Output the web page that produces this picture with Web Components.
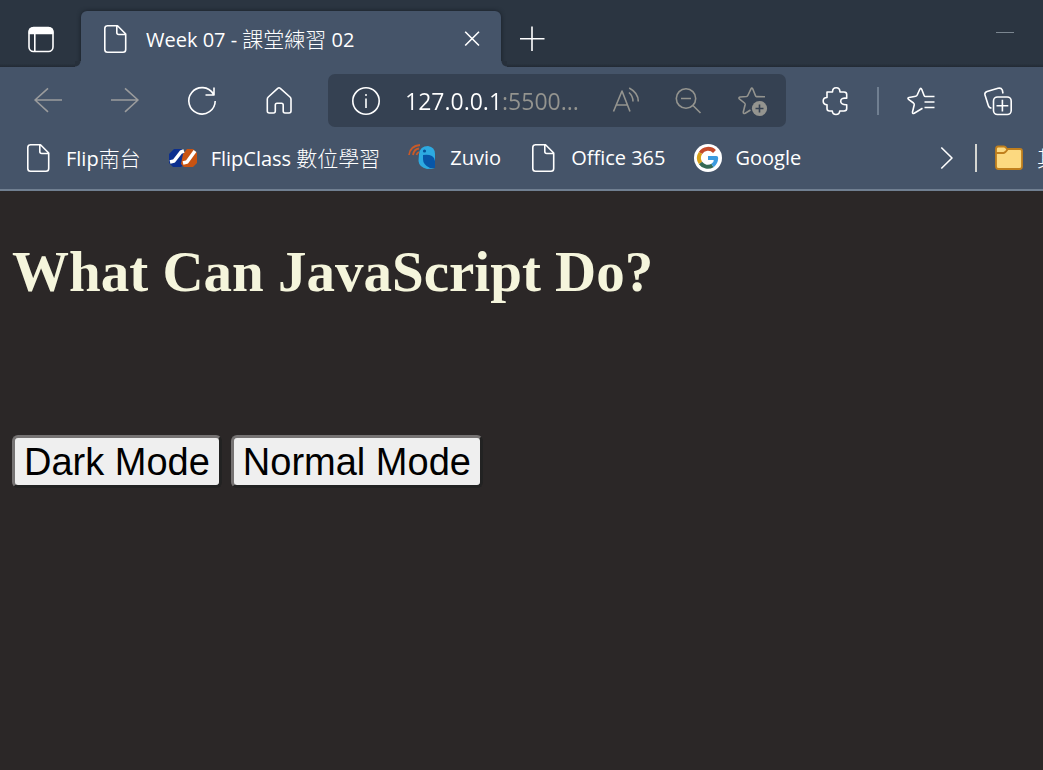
<!DOCTYPE html>
<html lang="zh-Hant">
<head>
<meta charset="utf-8">
<meta name="viewport" content="width=device-width, initial-scale=1">
<title>Week 07 - 課堂練習 02</title>
<style>
  body { margin: 0; background: #2b2727; }
</style>
</head>
<body>
<browser-window></browser-window>

<script>
const ICONS = {
  panes: `<rect x="2" y="1.500" width="24" height="24" rx="4.500"/><path d="M2.500 7.500V5.500Q2.500 2 6 2H22Q25.500 2 25.500 5.500V7.500Z" fill="currentColor"/><path d="M7.800 8V25"/>`,
  page: `<path d="M6 .8H16.500L24.700 9V24.500Q24.700 27.200 22 27.200H6.500Q3.800 27.200 3.800 24.500V3.500Q3.800.8 6.500.8M15.800 1V7.500Q15.800 9.500 17.800 9.500H24.500"/>`,
  back: `<path d="M28 13H1M14 1.300L1 13L14 24.800"/>`,
  forward: `<path d="M0 13H27M14 1.300L27 13L14 24.800"/>`,
  reload: `<path d="M25.300 7A13.200 13.200 0 1 0 27.200 14M26 .5V8H17.500"/>`,
  home: `<path d="M2.300 12.300Q2.300 11 3.300 10L12.700 1.300Q14 .3 15.300 1.300L25 10Q26 11 26 12.300V24Q26 26 24 26H20Q18.200 26 18.200 24V18Q18.200 16.300 16.500 16.300H12Q10.300 16.300 10.300 18V24Q10.300 26 8.500 26H4.300Q2.300 26 2.300 24Z"/>`,
  info: `<circle cx="14" cy="14" r="13.200"/><path d="M14 11.500V21"/><circle cx="14" cy="8" r="1" fill="currentColor" stroke="none"/>`,
  read: `<path d="M1.500 24.500L10 4L18 24.500M4.500 18H15.300M17 5.500Q21 9 21 14.500M17.200 1Q26.500 6 26.300 14.500"/>`,
  zoomout: `<circle cx="11" cy="11.500" r="9.700"/><path d="M6 11.500H16M18 18.500L25.500 26"/>`,
  staradd: `<path d="M27 9.800L18.500 9.600Q17.800 9.600 17.500 8.800L14.700 1.800Q13.800.2 13 1.800L9.800 8.500Q9.400 9.300 8.500 9.500L2 10Q.3 10.500 1.300 11.800L6.500 16Q7.300 16.700 7.100 17.700L5.300 25Q5.200 27.200 7.200 26.200L12.500 23"/><circle cx="21.500" cy="21.500" r="7.600" fill="currentColor" stroke="none"/><path d="M21.500 17.500V25.500M17.500 21.500H25.500" stroke="#354152"/>`,
  puzzle: `<path d="M5 5H10.500Q10.500.8 14.200.8T18 5H22Q24.700 5 24.700 7.500V11.200Q18.700 10.500 18.700 14.200T24.700 17.700V21.500Q24.700 24 22 24H17.700Q17.500 27.500 14 27.500T10.300 24H7.500Q5 24 5 21.500V17.700Q1.200 17.500 1.200 14T5 10.500V5Z"/>`,
  favorites: `<path d="M27.500 9.500H18.500Q17.500 9.500 17.200 8.700L14.800 2.500Q13.800.3 12.700 2.500L10.200 8Q9.800 9 8.800 9.200L2 10.500Q.2 11 1.500 12.300L6.500 16Q7.500 16.800 7.200 18L5.500 25Q5.300 27.200 7.200 26.200L15.500 21.300M17.500 15H27.500M17.500 20.500H27.500"/>`,
  collections: `<path d="M7.500 21Q5 21 4.300 18.500L1 8Q.3 5.500 3 4.500L14 1.300Q17 .4 18.300 3L19 6.500"/><rect x="9.500" y="10" width="17.700" height="17.500" rx="4"/><path d="M12.500 18.700H24.300M18.400 12.800V24.600"/>`,
  close: `<path d="M7.200 6.700L21 20.500M21 6.700L7.200 20.500"/>`,
  plus: `<path d="M14 1.500V26M2 13.700H26.500"/>`,
  chevron: `<path d="M8.300 3.500L19 14L8.300 24.500"/>`,
  minimize: `<path d="M5 7.500H23" stroke-width="1"/>`,
  flip: `<g stroke="none"><path d="M5 5H12Q15 6 15 10V20L12 23H4L0 19V10Z" fill="#0b2e8e"/><path d="M18 5H24L28 9V19L24 23H15L12 20L14 10Z" fill="#c85312"/></g><path d="M1 18L5 17L12 8L15 7M14 19L18 18L26 7" stroke="#fff" stroke-width="3.500"/>`,
  zuvio: `<g stroke="none"><path d="M11 10Q12 2 20 2Q27 3 27 10V24Q24 25 19 25Q11 23 10.500 17Z" fill="#2daae1"/><path d="M15 11Q20 10 24 12Q27 14 27 17V24H22Q15 21 15 15Z" fill="#0756a8"/><circle cx="16.500" cy="7" r="1.600" fill="#075399"/></g><path d="M1 11Q2 2 12 1M5 11Q6 5 11 4.500M8.500 11Q9 9 11 8" stroke="#c85a28" stroke-width="1.800"/>`,
  google: `<circle cx="14" cy="14" r="14" fill="#fff" stroke="none"/><g stroke-width="4"><path d="M20.500 7.500A9 9 0 0 0 6.500 9" stroke="#c54b2b"/><path d="M6.500 9A9 9 0 0 0 6.500 19" stroke="#d7a018"/><path d="M6.500 19A9 9 0 0 0 18.500 21.500" stroke="#356b55"/><path d="M18.500 21.500Q22 19 22.200 14H14" stroke="#3b9bdf"/></g>`,
  folder: `<path d="M3 2.500H9Q10.500 2.500 12 5H25Q27 5 27 7V22.500Q27 25 24.500 25H3.500Q1 25 1 22.500V5Q1 2.500 3 2.500Z" fill="#fcd980" stroke="#c07f1d" stroke-width="1.800"/><path d="M1 9H8.500Q10 9 12.500 5.500" stroke="#c07f1d" stroke-width="1.800"/>`
};

const define = (name, markup, setup) => {
  const template = document.createElement('template');
  template.innerHTML = markup;
  customElements.define(name, class extends HTMLElement {
    static observedAttributes = ['name'];
    constructor() {
      super();
      this.attachShadow({ mode: 'open' }).append(template.content.cloneNode(true));
    }
    connectedCallback() { if (setup) setup(this, this.shadowRoot); }
    attributeChangedCallback() { if (setup) setup(this, this.shadowRoot); }
  });
};

define('ui-icon', `
  <style>
    :host { display: block; flex: none; width: 28px; height: 28px; }
    svg { display: block; width: 28px; height: 28px; overflow: visible; }
  </style>
  <svg viewBox="0 0 28 28" fill="none" stroke="currentColor" stroke-width="1.600" stroke-linejoin="round" stroke-linecap="butt" aria-hidden="true"></svg>`,
  (host, root) => { root.querySelector('svg').innerHTML = ICONS[host.getAttribute('name')] || ''; });

define('icon-button', `
  <style>
    :host { display: block; flex: none; width: 77px; }
    button { display: flex; align-items: center; justify-content: center; width: 100%; height: 44px;
      margin: 0; padding: 0; border: 0; border-radius: 6px; background: none; color: inherit; }
  </style>
  <button type="button"><ui-icon></ui-icon></button>`,
  (host, root) => {
    root.querySelector('ui-icon').setAttribute('name', host.getAttribute('icon'));
    root.querySelector('button').setAttribute('aria-label', host.getAttribute('label'));
  });

define('browser-tab', `
  <style>
    :host { display: flex; align-items: center; box-sizing: border-box; position: relative;
      flex: 0 1 420px; min-width: 0; height: 56px; padding: 0 9px 0 20px; gap: 17px;
      border-radius: 6px 6px 0 0; background: #455469; box-shadow: 0 0 4px #171d26; clip-path: inset(-5px -8px 0 -8px); }
    :host::before, :host::after { content: ""; position: absolute; bottom: 0; width: 6px; height: 6px; }
    :host::before { right: 100%; background: radial-gradient(circle at 0 0, #27303b 5px, #455469 6px); }
    :host::after { left: 100%; background: radial-gradient(circle at 100% 0, #27303b 5px, #455469 6px); }
    .title { flex: 1; min-width: 0; white-space: nowrap; overflow: hidden; }
    icon-button { width: 40px; }
  </style>
  <ui-icon name="page"></ui-icon>
  <span class="title"><slot></slot></span>
  <icon-button icon="close" label="Close tab"></icon-button>`);

define('tab-strip', `
  <style>
    :host { display: flex; align-items: flex-end; height: 67px; color: #fff;
      background: linear-gradient(#2b3541 95%, #222a34); }
    .menu { width: 81px; align-self: center; margin-top: 12px; }
    .new { width: 61px; align-self: center; margin-top: 10px; }
    .min { width: 77px; margin-left: auto; color: #7b8690; align-self: center; margin-top: 10px; }
  </style>
  <icon-button class="menu" icon="panes" label="Tab actions"></icon-button>
  <browser-tab>Week 07 - <slot></slot> 02</browser-tab>
  <icon-button class="new" icon="plus" label="New tab"></icon-button>
  <icon-button class="min" icon="minimize" label="Minimize"></icon-button>`);

define('address-field', `
  <style>
    :host { display: flex; align-items: center; box-sizing: border-box; flex: 1; min-width: 0; height: 53px;
      padding: 0 3px 0 24px; border-radius: 7px; background: #354152; }
    input { flex: 1; width: 0; min-width: 0; height: 36px; margin: 0 0 0 25px; padding: 0; border: 0; outline: 0;
      font: 23px/36px "Open Sans", "Noto Sans", sans-serif; color: transparent; caret-color: #fff;
      background: linear-gradient(90deg, #fff 98px, #94948f 98px); -webkit-background-clip: text; background-clip: text; }
    icon-button { width: 63px; color: #94948f; }
  </style>
  <ui-icon name="info"></ui-icon>
  <input type="text" aria-label="Address" value="127.0.0.1:5500..." spellcheck="false">
  <icon-button icon="read" label="Read aloud"></icon-button>
  <icon-button icon="zoomout" label="Zoom out"></icon-button>
  <icon-button icon="staradd" label="Add to favorites"></icon-button>`);

define('tool-bar', `
  <style>
    :host { display: flex; align-items: center; height: 53px; padding: 7px 7px 0 9px; }
    .off { color: #9b9c9d; }
    address-field { margin: 0 11px; }
    hr { flex: none; width: 2px; height: 28px; margin: 0 3px; border: 0; background: #707f91; }
  </style>
  <icon-button class="off" icon="back" label="Back"></icon-button>
  <icon-button class="off" icon="forward" label="Forward"></icon-button>
  <icon-button icon="reload" label="Refresh"></icon-button>
  <icon-button icon="home" label="Home"></icon-button>
  <address-field></address-field>
  <icon-button icon="puzzle" label="Extensions"></icon-button>
  <hr>
  <icon-button icon="favorites" label="Favorites"></icon-button>
  <icon-button icon="collections" label="Collections"></icon-button>`);

define('bookmark-item', `
  <style>
    :host { display: block; flex: none; }
    a { display: flex; align-items: center; gap: 14px; color: inherit; text-decoration: none; white-space: nowrap; }
  </style>
  <a href="#"><ui-icon></ui-icon><span><slot></slot></span></a>`,
  (host, root) => root.querySelector('ui-icon').setAttribute('name', host.getAttribute('icon')));

define('bookmarks-bar', `
  <style>
    :host { display: flex; align-items: center; height: 62px; overflow: hidden; border-bottom: 2px solid #707f91; }
    nav { display: flex; flex: 1; min-width: 0; gap: 28px; padding-left: 24px; overflow: hidden; }
    .cjk { font-size: 21px; line-height: 28px; font-weight: 300; }
    .more { width: 56px; }
    hr { flex: none; width: 2px; height: 28px; margin: 0; border: 0; background: #d5d6d2; }
    .others { width: 48px; margin-left: 18px; }
  </style>
  <nav aria-label="Favorites bar">
    <bookmark-item icon="page">Flip<span class="cjk">南台</span></bookmark-item>
    <bookmark-item icon="flip">FlipClass <span class="cjk">數位學習</span></bookmark-item>
    <bookmark-item icon="zuvio">Zuvio</bookmark-item>
    <bookmark-item icon="page">Office 365</bookmark-item>
    <bookmark-item icon="google">Google</bookmark-item>
  </nav>
  <icon-button class="more" icon="chevron" label="More favorites"></icon-button>
  <hr>
  <bookmark-item class="others" icon="folder"><span class="cjk">其</span></bookmark-item>`);

define('mode-button', `
  <style>
    :host { display: block; }
    button { box-sizing: border-box; height: 53px; margin: 0; padding: 0 9px; border: 3px solid;
      border-color: #767373 #222 #222 #767373; border-radius: 6px; background: #efefef; color: #000;
      font: 38px/44px "Liberation Sans", Arial, sans-serif; white-space: nowrap; }
  </style>
  <button type="button"><slot></slot></button>`);

define('web-page', `
  <style>
    :host { display: block; flex: 1; padding: 48px 12px; background: #2b2727; color: #f5f5dc; }
    :host([normal]) { background: #fff; color: #000; }
    h1 { margin: 0 0 130px; font: bold 57px/66px "Liberation Serif", "Times New Roman", serif; }
    .modes { display: flex; flex-wrap: wrap; gap: 9px; }
  </style>
  <h1>What Can JavaScript Do?</h1>
  <div class="modes">
    <mode-button id="dark">Dark Mode</mode-button>
    <mode-button id="normal">Normal Mode</mode-button>
  </div>`,
  (host, root) => {
    root.getElementById('dark').onclick = () => host.removeAttribute('normal');
    root.getElementById('normal').onclick = () => host.setAttribute('normal', '');
  });

define('browser-window', `
  <style>
    :host { display: flex; flex-direction: column; min-height: 100vh; }
    header { background: #455469; color: #fff; font: 20px/28px "Open Sans", "Noto Sans", "Noto Sans CJK TC", sans-serif; }
    .cjk { font-size: 21px; line-height: 28px; font-weight: 300; }
  </style>
  <header>
    <tab-strip><span class="cjk">課堂練習</span></tab-strip>
    <tool-bar></tool-bar>
    <bookmarks-bar></bookmarks-bar>
  </header>
  <web-page></web-page>`);
</script>
</body>
</html>
